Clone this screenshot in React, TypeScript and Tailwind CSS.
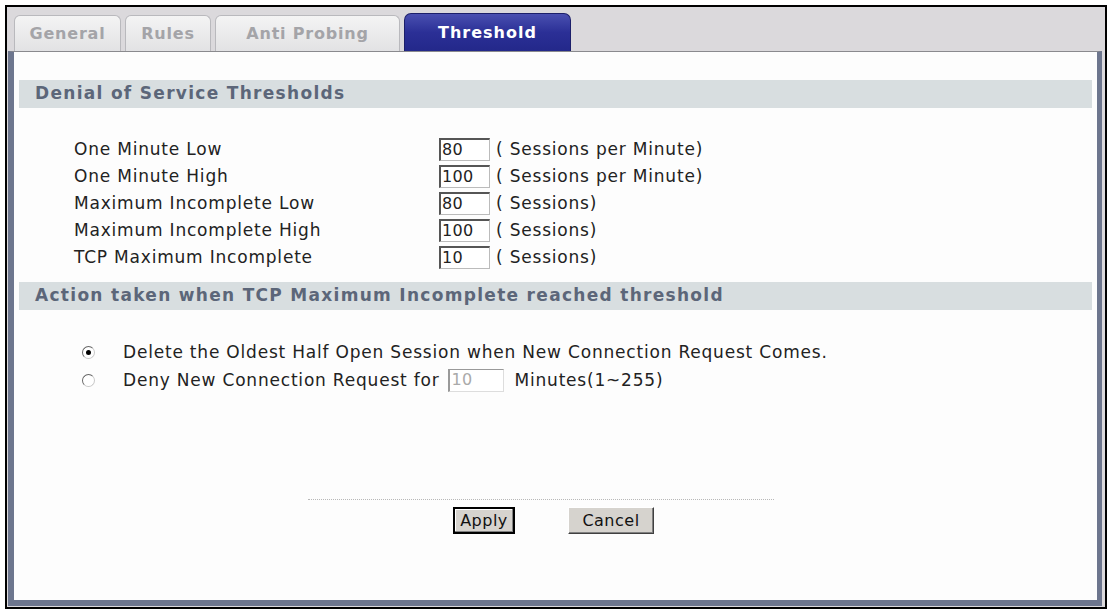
import React from "react";

const FONT = { fontFamily: '"DejaVu Sans", Verdana, sans-serif' };

const rows = [
  { label: "One Minute Low", value: "80", unit: "( Sessions per Minute)" },
  { label: "One Minute High", value: "100", unit: "( Sessions per Minute)" },
  { label: "Maximum Incomplete Low", value: "80", unit: "( Sessions)" },
  { label: "Maximum Incomplete High", value: "100", unit: "( Sessions)" },
  { label: "TCP Maximum Incomplete", value: "10", unit: "( Sessions)" },
];

function Tab({ label, active, w }: { label: string; active?: boolean; w: string }) {
  if (active) {
    return (
      <div
        className={`${w} h-[38px] rounded-t-[7px] border border-b-0 border-[#1c1f6a] bg-gradient-to-b from-[#4a4fb0] via-[#2b2f96] to-[#23288a] flex items-center justify-center text-white font-bold text-[16px] tracking-[1px]`}
      >
        {label}
      </div>
    );
  }
  return (
    <div
      className={`${w} h-[36px] rounded-t-[6px] border border-b-0 border-[#b9b9bd] bg-gradient-to-b from-[#f4f4f4] to-[#e2e2e4] flex items-center justify-center text-[#a4a4a8] font-bold text-[16px] tracking-[0.8px]`}
    >
      {label}
    </div>
  );
}

function SectionHead({ children }: { children: React.ReactNode }) {
  return (
    <div className="mx-[5px] h-[28px] bg-[#d8dee0] flex items-center pl-[16px] text-[17px] font-bold text-[#5c6679] tracking-[1.3px]">
      {children}
    </div>
  );
}

function Radio({ checked }: { checked?: boolean }) {
  return (
    <span className="w-[13px] h-[13px] rounded-full border border-[#c8c8c8] border-t-[#666] border-l-[#666] bg-white flex items-center justify-center">
      {checked && <span className="w-[5px] h-[5px] rounded-full bg-black" />}
    </span>
  );
}

export default function App() {
  return (
    <div className="w-[1109px] h-[612px] bg-white pt-[5px] pl-[5px]" style={FONT}>
      <div className="w-[1102px] h-[604px] border-2 border-black bg-[#dbd9dc] flex flex-col">
        <div className="h-[44px] flex items-end pl-[7px] gap-[4px]">
          <Tab label="General" w="w-[107px]" />
          <Tab label="Rules" w="w-[86px]" />
          <Tab label="Anti Probing" w="w-[185px]" />
          <Tab label="Threshold" w="w-[167px]" active />
        </div>
        <div className="flex-1 ml-[1px] mr-[3px] mb-[1px] bg-[#fdfdfd] border-t border-t-[#8a8a8e] border-l-[6px] border-l-[#6d768e] border-r-[5px] border-r-[#6d768e] border-b-[6px] border-b-[#6d768e] flex flex-col">
          <div className="h-[28px]" />
          <SectionHead>Denial of Service Thresholds</SectionHead>
          <div className="pt-[30px] pb-[13px] flex flex-col gap-[4px] text-[17px] text-[#222] tracking-[0.8px]">
            {rows.map((r) => (
              <div key={r.label} className="flex items-center h-[23px]">
                <span className="w-[425px] pl-[60px]">{r.label}</span>
                <span className="w-[51px] h-[23px] border border-[#bbb] border-t-[#555] border-l-[#555] border-t-2 border-l-2 bg-white pl-[1px] leading-[19px] text-[16px] tracking-[0.3px]">
                  {r.value}
                </span>
                <span className="pl-[6px]">{r.unit}</span>
              </div>
            ))}
          </div>
          <SectionHead>Action taken when TCP Maximum Incomplete reached threshold</SectionHead>
          <div className="pt-[31px] flex flex-col gap-[5px] text-[17px] text-[#222] tracking-[0.8px]">
            <div className="flex items-center h-[23px] pl-[68px]">
              <Radio checked />
              <span className="pl-[28px]">
                Delete the Oldest Half Open Session when New Connection Request Comes.
              </span>
            </div>
            <div className="flex items-center h-[23px] pl-[68px]">
              <Radio />
              <span className="pl-[28px]">Deny New Connection Request for</span>
              <span className="ml-[8px] w-[56px] h-[23px] border border-[#ddd] border-t-[#999] border-l-[#999] border-l-2 bg-white pl-[2px] leading-[20px] text-[#aaa] text-[16px] tracking-[0.3px]">
                10
              </span>
              <span className="pl-[11px]">Minutes(1~255)</span>
            </div>
          </div>
          <div className="mt-[107px] ml-[294px] w-[466px] border-t border-dotted border-[#b8b8b8]" />
          <div className="mt-[7px] flex pl-[439px] gap-[53px] text-[16px] tracking-[0.5px]">
            <button className="w-[62px] h-[27px] bg-[#d6d3ce] border-2 border-black shadow-[inset_-1px_-1px_0_#808080,inset_1px_1px_0_#fff] text-[#111]">
              Apply
            </button>
            <button className="w-[86px] h-[27px] bg-[#d6d3ce] border border-[#404040] border-t-[#fff] border-l-[#fff] shadow-[inset_-1px_-1px_0_#808080] text-[#111]">
              Cancel
            </button>
          </div>
        </div>
      </div>
    </div>
  );
}
